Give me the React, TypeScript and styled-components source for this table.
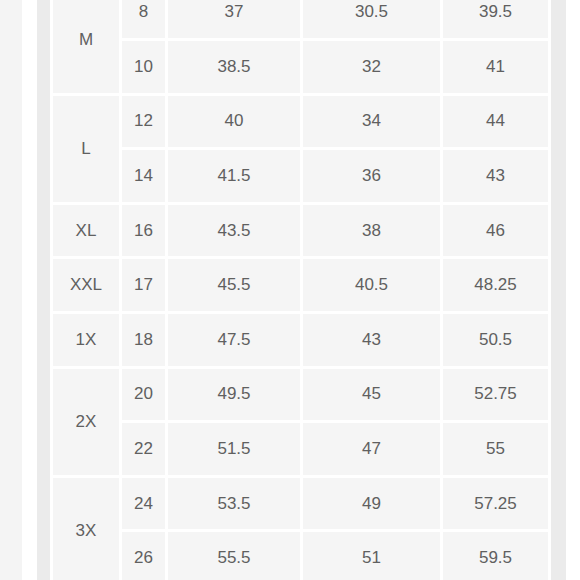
import React from 'react';
import styled, { createGlobalStyle } from 'styled-components';

interface SizeGroup {
    label: string;
    rows: string[][];
}

const groups: SizeGroup[] = [
    { label: 'M', rows: [['8', '37', '30.5', '39.5'], ['10', '38.5', '32', '41']] },
    { label: 'L', rows: [['12', '40', '34', '44'], ['14', '41.5', '36', '43']] },
    { label: 'XL', rows: [['16', '43.5', '38', '46']] },
    { label: 'XXL', rows: [['17', '45.5', '40.5', '48.25']] },
    { label: '1X', rows: [['18', '47.5', '43', '50.5']] },
    { label: '2X', rows: [['20', '49.5', '45', '52.75'], ['22', '51.5', '47', '55']] },
    { label: '3X', rows: [['24', '53.5', '49', '57.25'], ['26', '55.5', '51', '59.5']] },
];

const GlobalStyle = createGlobalStyle`
    html, body {
        margin: 0;
        padding: 0;
        background: #ffffff;
    }
`;

const Page = styled.div`
    display: flex;
    height: 580px;
    overflow: hidden;
    background: #ffffff;
    font-family: "Liberation Sans", Arial, sans-serif;
`;

const SideStrip = styled.div`
    width: 22px;
    flex: none;
    background: #f4f4f4;
    margin-right: 15px;
`;

const Panel = styled.div`
    width: 529px;
    flex: none;
    background: #ebebeb;
    padding: 0 15px 0 13px;
    box-sizing: border-box;
`;

const TableWrap = styled.div`
    background: #ffffff;
    height: 100%;
    overflow: hidden;
`;

const Table = styled.table`
    border-collapse: separate;
    border-spacing: 3px;
    margin-top: -16.5px;
    table-layout: fixed;
`;

const Cell = styled.td<{ $width: number }>`
    width: ${(p) => p.$width}px;
    height: 51.6px;
    padding: 0;
    background: #f5f5f5;
    color: #606060;
    font-size: 17px;
    text-align: center;
    vertical-align: middle;
`;

const widths = [66, 43, 132, 137, 105];

const SizeChart: React.FC = () => {
    const rendered = groups.flatMap((group) =>
        group.rows.map((row, i) => (
            <tr key={row[0]}>
                {i === 0 && (
                    <Cell $width={widths[0]} rowSpan={group.rows.length}>
                        {group.label}
                    </Cell>
                )}
                {row.map((value, j) => (
                    <Cell $width={widths[j + 1]} key={j}>
                        {value}
                    </Cell>
                ))}
            </tr>
        ))
    );

    return (
        <Page>
            <SideStrip />
            <Panel>
                <TableWrap>
                    <Table>
                        <tbody>{rendered}</tbody>
                    </Table>
                </TableWrap>
            </Panel>
        </Page>
    );
};

const App: React.FC = () => (
    <>
        <GlobalStyle />
        <SizeChart />
    </>
);

export default App;
